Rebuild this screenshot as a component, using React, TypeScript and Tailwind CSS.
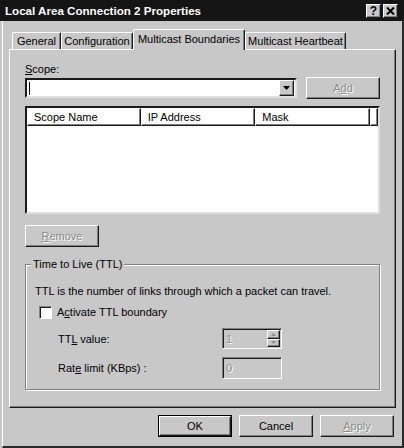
import type { ReactNode } from "react";

const raised =
    "border border-t-white border-l-white border-r-[#1a1a1a] border-b-[#1a1a1a] shadow-[inset_-1px_-1px_0_#808080]";
const sunken =
    "border border-t-[#808080] border-l-[#808080] border-r-white border-b-white shadow-[inset_1px_1px_0_#1a1a1a]";
const disabledText = "text-[#8c8c8c] [text-shadow:1px_1px_0_#fff]";

function Button({
    children,
    disabled,
    isDefault,
}: {
    children: ReactNode;
    disabled?: boolean;
    isDefault?: boolean;
}) {
    return (
        <div className={isDefault ? "border border-black" : ""}>
            <div
                className={`${raised} bg-[#c8c8c8] flex items-center justify-center ${
                    isDefault ? "w-[72px] h-[20px]" : "w-[74px] h-[22px]"
                } ${disabled ? disabledText : ""}`}
            >
                {children}
            </div>
        </div>
    );
}

function Tab({ label, width, selected }: { label: string; width: number; selected?: boolean }) {
    return (
        <div
            className={`flex items-center justify-center whitespace-nowrap bg-[#c8c8c8] border-t border-l border-t-white border-l-white border-r border-r-[#1a1a1a] rounded-t-[2px] shadow-[inset_-1px_0_0_#808080] ${
                selected ? "h-[21px] -mb-[1px] relative z-10 pb-[3px]" : "h-[17px]"
            }`}
            style={{ width }}
        >
            {label}
        </div>
    );
}

function HeaderCell({ label, width }: { label: string; width?: number }) {
    return (
        <div
            className={`${raised} h-[18px] flex items-center pl-[6px] ${width ? "" : "flex-1"}`}
            style={width ? { width } : undefined}
        >
            {label}
        </div>
    );
}

export default function App() {
    return (
        <div className="w-[404px] h-[448px] bg-[#c8c8c8] flex flex-col font-['Liberation_Sans',Arial,sans-serif] text-[11px] leading-[14px] text-black overflow-hidden">
            {/* title bar */}
            <div className="h-[21px] bg-[#151515] flex items-center pl-[5px] pr-[6px] shrink-0">
                <span className="flex-1 text-white font-bold text-[11.6px]">
                    Local Area Connection 2 Properties
                </span>
                <div className="flex gap-[2px]">
                    <div className={`${raised} w-[15px] h-[14px] bg-[#c8c8c8] flex items-center justify-center font-bold text-[12px] leading-none`}>
                        ?
                    </div>
                    <div className={`${raised} w-[15px] h-[14px] bg-[#c8c8c8] flex items-center justify-center`}>
                        <svg width="9" height="8" viewBox="0 0 9 8">
                            <path d="M1 0.5 L8 7.5 M8 0.5 L1 7.5" stroke="#000" strokeWidth="2" />
                        </svg>
                    </div>
                </div>
            </div>

            <div className="flex-1 flex flex-col ml-[2px] border-l border-l-white border-r-2 border-r-[#2a2a2a] border-b-2 border-b-[#2a2a2a]">
                {/* tabs */}
                <div className="flex items-end pl-[9px] mt-[8px]">
                    <Tab label="General" width={49} />
                    <Tab label="Configuration" width={72} />
                    <Tab label="Multicast Boundaries" width={112} selected />
                    <Tab label="Multicast Heartbeat" width={101} />
                </div>

                {/* panel */}
                <div className="ml-[6px] w-[387px] h-[359px] border border-t-white border-l-white border-r-[#1a1a1a] border-b-[#1a1a1a] shadow-[inset_-1px_-1px_0_#808080] pl-[15px] pt-[12px] flex flex-col">
                    <div>
                        <u>S</u>cope:
                    </div>
                    <div className="flex items-center gap-[9px] mt-[1px] h-[22px]">
                        <div className="w-[272px] h-[20px] bg-white border-2 border-t-[#1a1a1a] border-l-[#1a1a1a] border-r-[#e0e0e0] border-b-[#e0e0e0] flex items-center justify-between pl-[2px] pr-[1px]">
                            <div className="w-[1px] h-[13px] bg-black" />
                            <div className={`${raised} bg-[#c8c8c8] w-[15px] h-[16px] flex items-center justify-center`}>
                                <svg width="7" height="4" viewBox="0 0 7 4">
                                    <path d="M0 0 H7 L3.5 4 Z" fill="#000" />
                                </svg>
                            </div>
                        </div>
                        <Button disabled>
                            A<u>d</u>d
                        </Button>
                    </div>

                    {/* list */}
                    <div className="mt-[7px] w-[355px] h-[108px] bg-white border-2 border-t-[#1a1a1a] border-l-[#1a1a1a] border-r-[#dedede] border-b-[#dedede] flex flex-col">
                        <div className="flex">
                            <HeaderCell label="Scope Name" width={116} />
                            <HeaderCell label="IP Address" width={117} />
                            <HeaderCell label="Mask" width={117} />
                            <HeaderCell label="" />
                        </div>
                    </div>

                    <div className="mt-[11px]">
                        <Button disabled>
                            <u>R</u>emove
                        </Button>
                    </div>

                    {/* group */}
                    <div className="relative mt-[17px] w-[355px] h-[126px] border border-[#808080] shadow-[inset_1px_1px_0_#fff,1px_1px_0_#fff] pl-[9px] pt-[19px] flex flex-col">
                        <span className="absolute -top-[8px] left-[5px] px-[2px] bg-[#c8c8c8]">
                            Time to Live (TTL)
                        </span>
                        <div>TTL is the number of links through which a packet can travel.</div>
                        <div className="flex items-center mt-[7px] pl-[4px] gap-[5px]">
                            <div className={`${sunken} w-[13px] h-[13px] bg-white`} />
                            <span>
                                A<u>c</u>tivate TTL boundary
                            </span>
                        </div>
                        <div className="flex items-center mt-[9px] pl-[23px]">
                            <span className="w-[164px]">
                                TT<u>L</u> value:
                            </span>
                            <div className={`${sunken} w-[60px] h-[21px] flex items-center justify-between pl-[3px] pr-[1px]`}>
                                <span className={disabledText}>1</span>
                                <div className="flex flex-col h-[17px] w-[13px]">
                                    <div className={`${raised} flex-1 flex items-center justify-center`}>
                                        <svg width="5" height="3" viewBox="0 0 5 3">
                                            <path d="M0 3 H5 L2.5 0 Z" fill="#8c8c8c" />
                                        </svg>
                                    </div>
                                    <div className={`${raised} flex-1 flex items-center justify-center`}>
                                        <svg width="5" height="3" viewBox="0 0 5 3">
                                            <path d="M0 0 H5 L2.5 3 Z" fill="#8c8c8c" />
                                        </svg>
                                    </div>
                                </div>
                            </div>
                        </div>
                        <div className="flex items-center mt-[8px] pl-[23px]">
                            <span className="w-[164px]">
                                Rat<u>e</u> limit (KBps) :
                            </span>
                            <div className={`${sunken} w-[60px] h-[22px] flex items-center pl-[3px]`}>
                                <span className={disabledText}>0</span>
                            </div>
                        </div>
                    </div>
                </div>

                {/* dialog buttons */}
                <div className="flex justify-end gap-[7px] mt-[7px] pr-[8px]">
                    <Button isDefault>OK</Button>
                    <Button>Cancel</Button>
                    <Button disabled>
                        <u>A</u>pply
                    </Button>
                </div>
            </div>
        </div>
    );
}
